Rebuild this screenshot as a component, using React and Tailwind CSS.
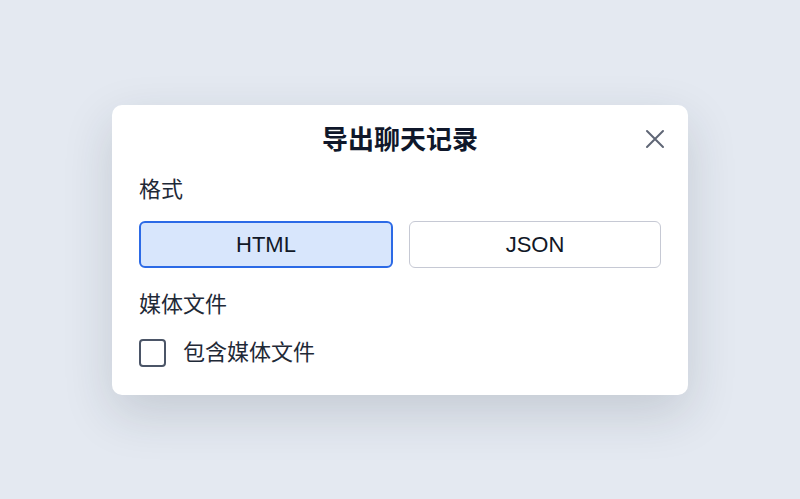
import React, { useState } from 'react';

const ExportDialog = () => {
  const [format, setFormat] = useState('html');
  const [includeMedia, setIncludeMedia] = useState(false);

  const btn = (active) =>
    active
      ? 'h-[47px] flex-1 rounded-[6px] border-2 border-[#2c6ae6] bg-[#d8e6fc] text-[22px] text-[#111827]'
      : 'h-[47px] flex-1 rounded-[6px] border-[1.5px] border-[#c6c9d4] bg-white text-[22px] text-[#111827]';

  return (
    <div className="w-[576px] rounded-[10px] bg-white px-[27px] pt-[20px] pb-[28px] shadow-[0_18px_50px_rgba(30,41,59,0.16)]">
      {/* Header */}
      <div className="relative flex h-[30px] items-center justify-center">
        <h2 className="text-[26px] font-bold leading-[30px] text-[#0f172a]">导出聊天记录</h2>
        <button className="absolute right-[-4px] top-[4px] text-[#5f6675]">
          <svg width="20" height="20" viewBox="0 0 20 20" fill="none" stroke="currentColor" strokeWidth="2" strokeLinecap="round">
            <path d="M2 2L18 18M18 2L2 18" />
          </svg>
        </button>
      </div>

      {/* Format */}
      <p className="mt-[20px] text-[22px] leading-[30px] text-[#1f2937]">格式</p>
      <div className="mt-[16px] flex gap-[16px]">
        <button onClick={() => setFormat('html')} className={btn(format === 'html')}>HTML</button>
        <button onClick={() => setFormat('json')} className={btn(format === 'json')}>JSON</button>
      </div>

      {/* Media */}
      <p className="mt-[22px] text-[22px] leading-[30px] text-[#1f2937]">媒体文件</p>
      <label className="mt-[19px] flex h-[28px] items-center gap-[17px]">
        <button
          onClick={() => setIncludeMedia(!includeMedia)}
          className="h-[28px] w-[27px] rounded-[4px] border-2 border-[#4b5567] bg-white"
        />
        <span className="text-[22px] leading-[30px] text-[#1f2937]">包含媒体文件</span>
      </label>
    </div>
  );
};

export default function App() {
  return (
    <div
      className="flex h-[499px] w-full items-center justify-center bg-[#e4e9f1]"
      style={{ fontFamily: '"Liberation Sans", "Noto Sans CJK SC", sans-serif' }}
    >
      <ExportDialog />
    </div>
  );
}
